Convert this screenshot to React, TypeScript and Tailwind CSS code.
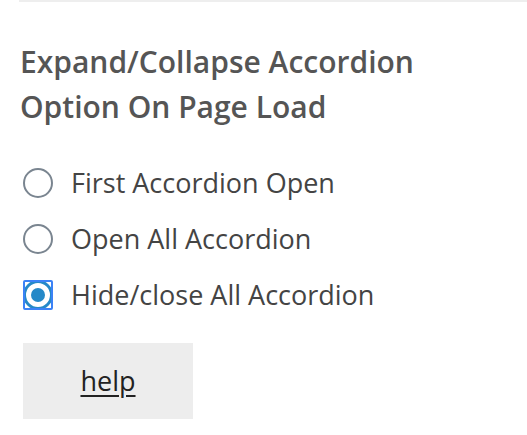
import React, { useState } from 'react';

const options = ['First Accordion Open', 'Open All Accordion', 'Hide/close All Accordion'];

function Radio({ checked }: { checked: boolean }) {
  if (checked) {
    return (
      <span className="relative flex h-[30px] w-[30px] shrink-0 items-center justify-center">
        <span className="absolute inset-[0px] rounded-[2px] border-2 border-[#3b82f6]" />
        <span className="flex h-[30px] w-[30px] items-center justify-center rounded-full border-[3px] border-[#2589c8] bg-white">
          <span className="h-[14px] w-[14px] rounded-full bg-[#2589c8]" />
        </span>
      </span>
    );
  }
  return <span className="h-[30px] w-[30px] shrink-0 rounded-full border-2 border-[#7a8590] bg-white" />;
}

export default function App() {
  const [sel, setSel] = useState(2);
  return (
    <div className="h-[435px] w-[527px] bg-white" style={{ fontFamily: '"Open Sans", "Noto Sans", sans-serif' }}>
      <div className="ml-[19px] h-[2px] bg-[#eeeeee]" />
      <div className="px-[20px] pt-[37px]">
        <h2 className="text-[30px] font-semibold leading-[45px] text-[#555555]">
          Expand/Collapse Accordion
          <br />
          Option On Page Load
        </h2>
        <div className="mt-[39px] flex flex-col gap-[26px] pl-[3px]">
          {options.map((o, i) => (
            <label key={o} className="flex h-[30px] cursor-pointer items-center gap-[18px]" onClick={() => setSel(i)}>
              <Radio checked={sel === i} />
              <span className="text-[27px] text-[#444444]">{o}</span>
            </label>
          ))}
        </div>
        <button className="mt-[33px] ml-[3px] flex h-[76px] w-[170px] items-center justify-center bg-[#ededed]">
          <span className="text-[27px] text-[#222222] underline underline-offset-[4px]">help</span>
        </button>
      </div>
    </div>
  );
}
